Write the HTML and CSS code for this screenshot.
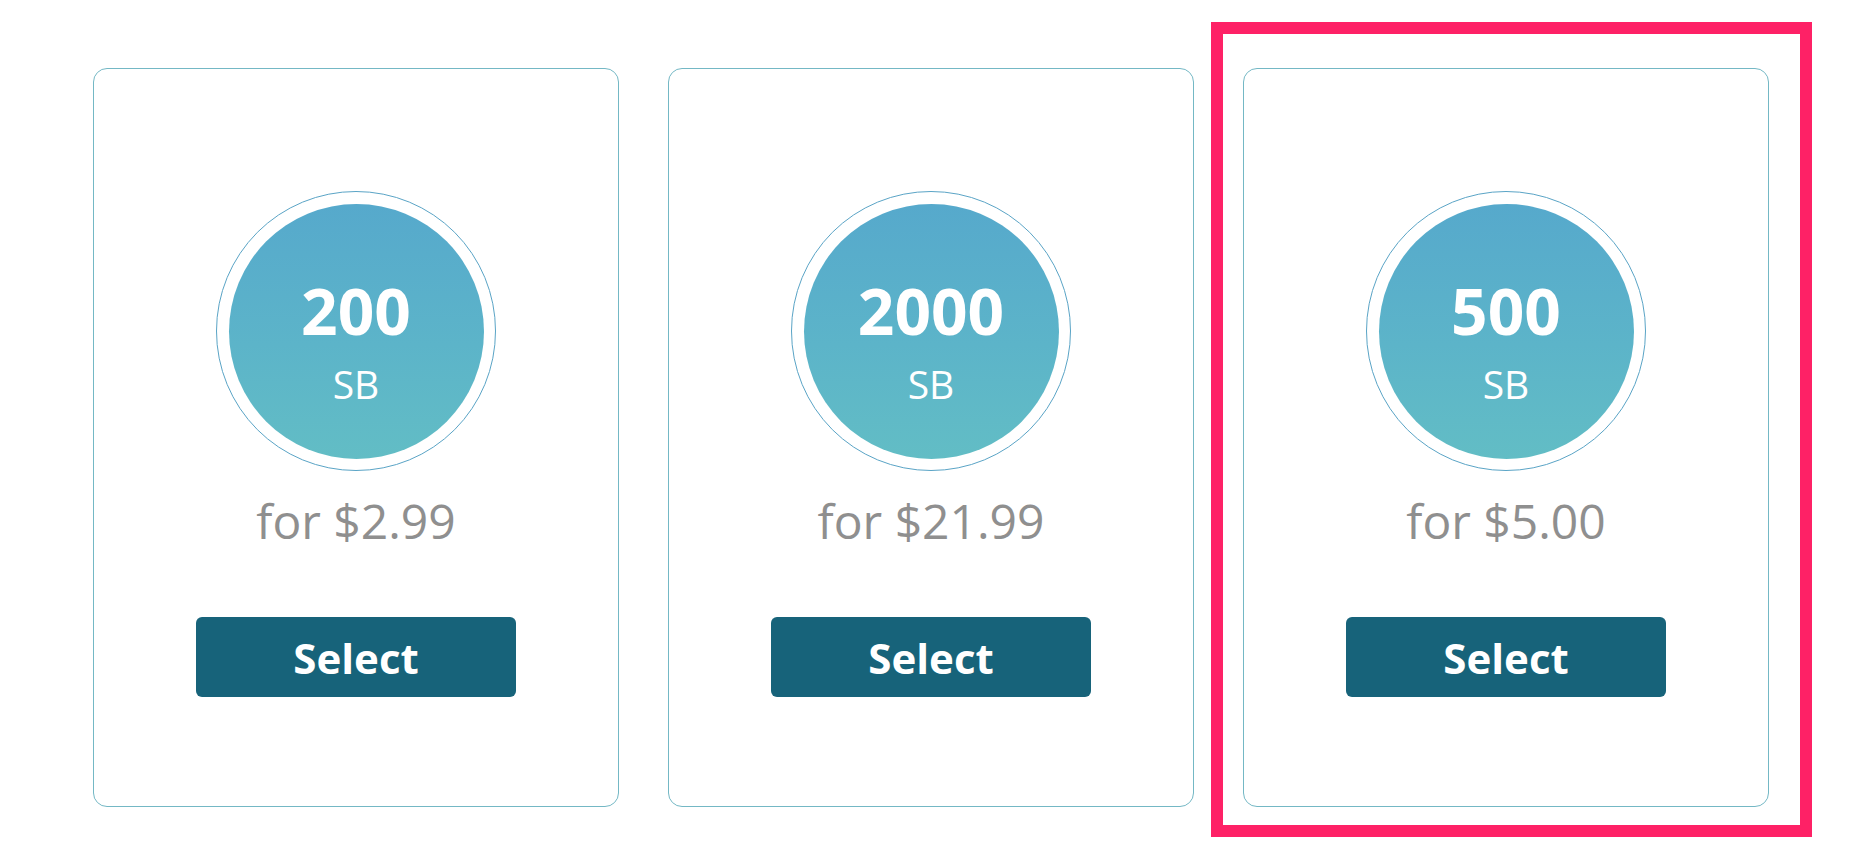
FILE: index.html
```html
<!DOCTYPE html>
<html>
<head>
<meta charset="utf-8">
<link rel="stylesheet" href="styles.css">
</head>
<body>
<div class="row">
  <div class="card">
    <div class="ring"><div class="coin"><span class="amount">200</span><span class="unit">SB</span></div></div>
    <div class="price">for $2.99</div>
    <button class="select">Select</button>
  </div>
  <div class="card">
    <div class="ring"><div class="coin"><span class="amount">2000</span><span class="unit">SB</span></div></div>
    <div class="price">for $21.99</div>
    <button class="select">Select</button>
  </div>
  <div class="card">
    <div class="ring"><div class="coin"><span class="amount">500</span><span class="unit">SB</span></div></div>
    <div class="price">for $5.00</div>
    <button class="select">Select</button>
  </div>
</div>
<div class="highlight"></div>
</body>
</html>
```
FILE: styles.css
```css
html, body {
  margin: 0;
  background: #ffffff;
  font-family: "Open Sans", "Noto Sans", sans-serif;
}
body {
  position: relative;
  width: 1852px;
  height: 866px;
  overflow: hidden;
}
.row {
  display: flex;
  gap: 49px;
  padding: 68px 0 0 93px;
}
.card {
  box-sizing: border-box;
  width: 526px;
  height: 739px;
  border: 1px solid #74b8c5;
  border-radius: 14px;
  display: flex;
  flex-direction: column;
  align-items: center;
  padding-top: 122px;
}
.ring {
  box-sizing: border-box;
  width: 280px;
  height: 280px;
  border: 1px solid #5aa4c6;
  border-radius: 50%;
  display: flex;
  align-items: center;
  justify-content: center;
}
.coin {
  width: 255px;
  height: 255px;
  border-radius: 50%;
  background: linear-gradient(180deg, #56a9cc 0%, #5cb4c9 55%, #62bdc5 100%);
  color: #ffffff;
  display: flex;
  flex-direction: column;
  align-items: center;
  box-sizing: border-box;
  padding-top: 75px;
}
.amount {
  font-size: 64px;
  font-weight: 700;
  line-height: 64px;
}
.unit {
  font-size: 39px;
  font-weight: 400;
  line-height: 36px;
  margin-top: 23px;
}
.price {
  margin-top: 19px;
  font-size: 48px;
  line-height: 62px;
  color: #8f8f8f;
}
.select {
  margin-top: 65px;
  width: 320px;
  height: 80px;
  border: none;
  border-radius: 6px;
  background: #17637a;
  color: #ffffff;
  font-family: "Open Sans", "Noto Sans", sans-serif;
  font-size: 42px;
  font-weight: 700;
  padding: 0;
  cursor: pointer;
}
.highlight {
  position: absolute;
  left: 1211px;
  top: 22px;
  width: 601px;
  height: 815px;
  box-sizing: border-box;
  border: 12px solid #fe2166;
  pointer-events: none;
}
```
